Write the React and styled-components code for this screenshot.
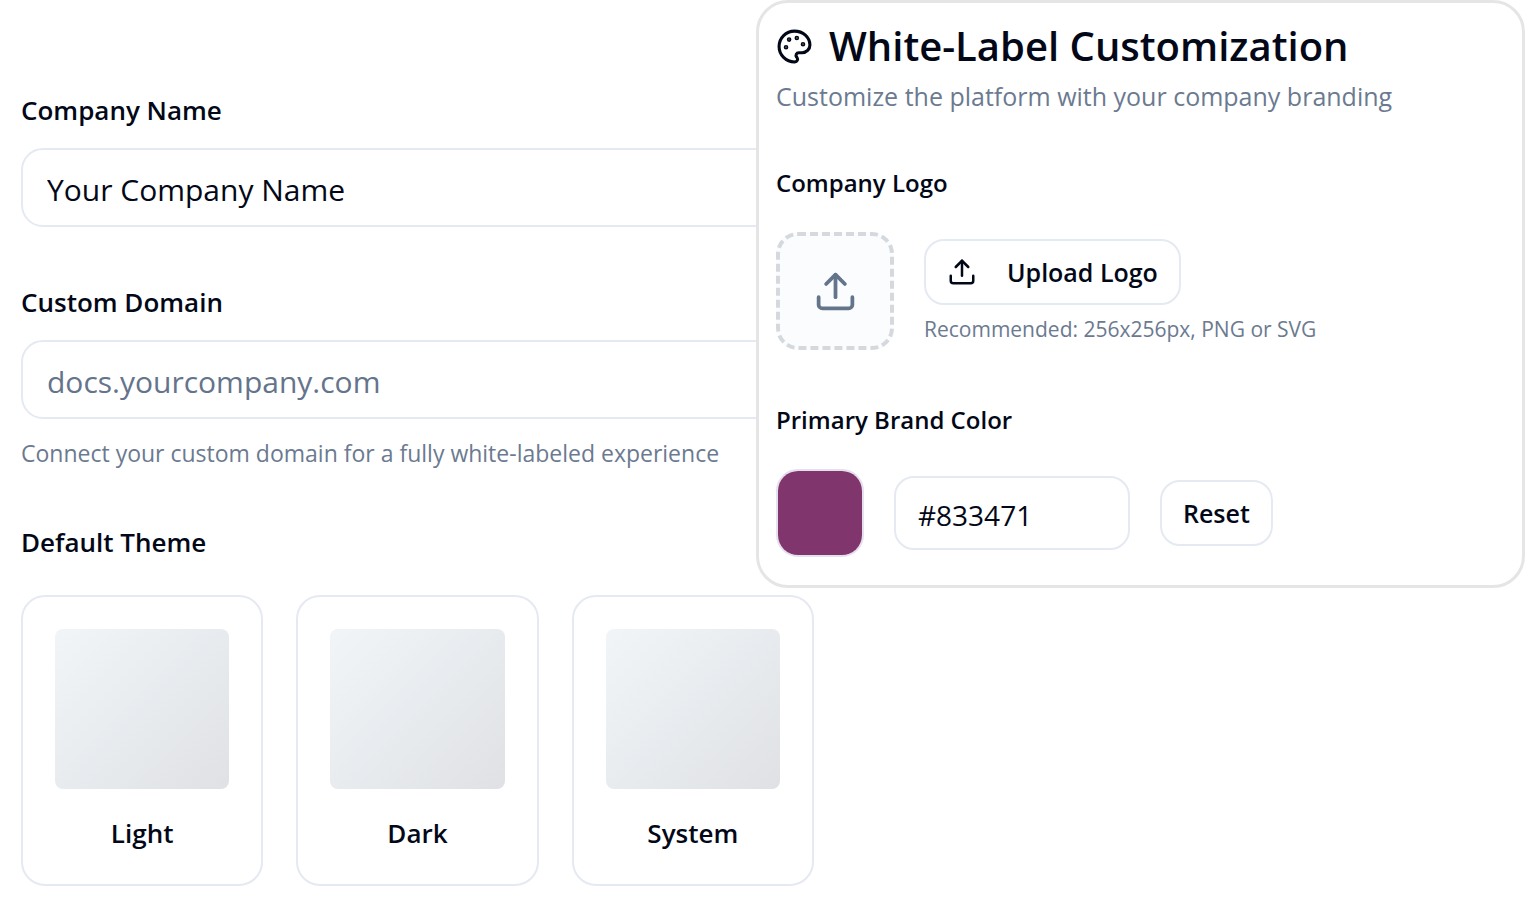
import React, { useState } from 'react'
import styled, { createGlobalStyle } from 'styled-components';
import { Palette, Upload } from 'lucide-react';

const GlobalStyle = createGlobalStyle`
    * {
        box-sizing: border-box;
    }
    body {
        margin: 0;
        background-color: white;
        color: #020817;
        font-family: "Open Sans", "Noto Sans", sans-serif;
    }
    button, input {
        font-family: inherit;
        color: inherit;
        margin: 0;
    }
`
const Page = styled.main`
    position: relative;
    padding: 92px 21px 16px;
`
const Form = styled.form`
    display: flex;
    flex-direction: column;
    gap: 57px;
    width: 54%;
    min-width: 700px;
    max-width: 793px;
`
const Field = styled.div`
    display: flex;
    flex-direction: column;
    gap: 20px;
`
const Label = styled.label`
    font-size: 26px;
    line-height: 36px;
    font-weight: 600;
`
const TextInput = styled.input`
    width: 100%;
    height: 79px;
    padding: 4px 24px 0;
    border: 2px solid #e5e9f1;
    border-radius: 22px;
    background-color: white;
    font-size: 30px;
    &::placeholder {
        color: #64748b;
        opacity: 1;
    }
`
const Hint = styled.p`
    margin: 0;
    color: #6b7a90;
    font-size: 23px;
    line-height: 28px;
`
const ThemeGroup = styled.fieldset`
    margin: 0;
    padding: 0;
    border: none;
`
const ThemeLegend = styled.legend`
    padding: 0 0 35px;
    font-size: 26px;
    line-height: 36px;
    font-weight: 600;
`
const ThemeList = styled.div`
    display: grid;
    grid-template-columns: repeat(3, 1fr);
    gap: 33px;
`
const ThemeCard = styled.button`
    display: flex;
    flex-direction: column;
    gap: 26px;
    padding: 32px;
    border: 2px solid #e5e9f1;
    border-radius: 24px;
    background-color: white;
    font-size: 26px;
    line-height: 37px;
    font-weight: 600;
    text-align: center;
`
const ThemePreview = styled.span`
    height: 160px;
    border-radius: 8px;
    background: linear-gradient(135deg, #f1f5f8, #dfe1e5);
`
const Panel = styled.section`
    position: absolute;
    top: 0;
    right: 1px;
    left: calc(50% - 7px);
    display: flex;
    flex-direction: column;
    gap: 52px;
    padding: 17px 17px 28px;
    border: 3px solid #e5e5e5;
    border-radius: 32px;
    background-color: white;
`
const PanelTitle = styled.h1`
    display: flex;
    align-items: center;
    gap: 16px;
    margin: 0 0 7px;
    font-size: 40px;
    line-height: 52px;
    font-weight: 600;
    white-space: nowrap;
`
const PanelText = styled.p`
    margin: 0;
    color: #6b7a90;
    font-size: 25px;
    line-height: 34px;
`
const PanelField = styled.div`
    display: flex;
    flex-direction: column;
    gap: 31px;
`
const PanelLabel = styled.label`
    font-size: 24px;
    line-height: 36px;
    font-weight: 600;
`
const Row = styled.div`
    display: flex;
    align-items: center;
    gap: 30px;
`
const DropZone = styled.div`
    display: flex;
    align-items: center;
    justify-content: center;
    width: 118px;
    height: 118px;
    border: 4px dashed #d5d9de;
    border-radius: 22px;
    background-color: #fafcfe;
    color: #64748b;
`
const UploadInfo = styled.div`
    display: flex;
    flex-direction: column;
    align-items: flex-start;
    gap: 10px;
`
const UploadHint = styled.p`
    margin: 0;
    color: #6b7a90;
    font-size: 21px;
    line-height: 28px;
`
const Button = styled.button`
    display: flex;
    align-items: center;
    gap: 30px;
    height: 66px;
    padding: 0 21px;
    border: 2px solid #e5e9f1;
    border-radius: 20px;
    background-color: white;
    font-size: 25px;
    font-weight: 600;
    white-space: nowrap;
`
const ColorInput = styled.input`
    width: 88px;
    height: 88px;
    padding: 0;
    border: 2px solid #e5e0ee;
    border-radius: 22px;
    background: none;
    overflow: hidden;
    appearance: none;
    &::-webkit-color-swatch-wrapper {
        padding: 0;
    }
    &::-webkit-color-swatch {
        border: none;
    }
`
const HexInput = styled.input`
    width: 236px;
    height: 74px;
    padding: 4px 22px 0;
    border: 2px solid #e5e9f1;
    border-radius: 20px;
    background-color: white;
    font-size: 28px;
`

const themes = ['Light', 'Dark', 'System']

const App = () => {
    const [company, setCompany] = useState('Your Company Name')
    const [hex, setHex] = useState('#833471')
    const [swatch, setSwatch] = useState('#80366d')

    const pickColor = (e) => {
        setSwatch(e.target.value)
        setHex(e.target.value)
    }

    const reset = () => {
        setSwatch('#80366d')
        setHex('#833471')
    }

    return (
        <Page>
            <GlobalStyle />
            <Form>
                <Field>
                    <Label htmlFor="company">Company Name</Label>
                    <TextInput id="company" type="text" value={company} onChange={(e) => setCompany(e.target.value)} />
                </Field>
                <Field>
                    <Label htmlFor="domain">Custom Domain</Label>
                    <TextInput id="domain" type="text" placeholder="docs.yourcompany.com" />
                    <Hint>Connect your custom domain for a fully white-labeled experience</Hint>
                </Field>
                <ThemeGroup>
                    <ThemeLegend>Default Theme</ThemeLegend>
                    <ThemeList>
                        {themes.map((theme) => (
                            <ThemeCard key={theme} type="button">
                                <ThemePreview />
                                {theme}
                            </ThemeCard>
                        ))}
                    </ThemeList>
                </ThemeGroup>
            </Form>
            <Panel>
                <header>
                    <PanelTitle><Palette size={37} /> White-Label Customization</PanelTitle>
                    <PanelText>Customize the platform with your company branding</PanelText>
                </header>
                <PanelField>
                    <PanelLabel htmlFor="upload">Company Logo</PanelLabel>
                    <Row>
                        <DropZone><Upload size={45} /></DropZone>
                        <UploadInfo>
                            <Button id="upload" type="button"><Upload size={30} /> Upload Logo</Button>
                            <UploadHint>Recommended: 256x256px, PNG or SVG</UploadHint>
                        </UploadInfo>
                    </Row>
                </PanelField>
                <PanelField>
                    <PanelLabel htmlFor="hex">Primary Brand Color</PanelLabel>
                    <Row>
                        <ColorInput type="color" aria-label="Pick brand color" value={swatch} onChange={pickColor} />
                        <HexInput id="hex" type="text" value={hex} onChange={(e) => setHex(e.target.value)} />
                        <Button type="button" onClick={reset}>Reset</Button>
                    </Row>
                </PanelField>
            </Panel>
        </Page>
    )
}

export default App;
